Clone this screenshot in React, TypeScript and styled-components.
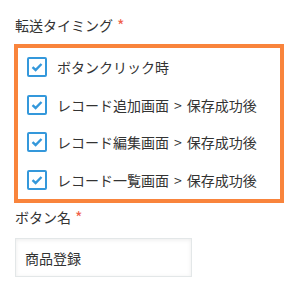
import styled, { createGlobalStyle } from "styled-components";

const Global = createGlobalStyle`
  body {
    margin: 0;
    background: #fff;
    font-family: "Noto Sans CJK JP", "Noto Sans", sans-serif;
    color: #333;
  }
`

const Page = styled.div`
  padding: 15px 0 0 14px;
`

const Label = styled.div<{ $top?: number }>`
  font-size: 14px;
  line-height: 20px;
  height: 20px;
  padding-left: 1px;
  margin-top: ${(p) => p.$top || 0}px;
  display: flex;
  align-items: center;
`

const Required = styled.span`
  color: #f0604a;
  font-size: 16px;
  margin-left: 4px;
  line-height: 20px;
`

const Frame = styled.div`
  box-sizing: border-box;
  width: 270px;
  height: 159px;
  margin-top: 9px;
  border: 4px solid #f9843c;
  display: flex;
  flex-direction: column;
`

const Row = styled.label`
  flex: 1;
  display: flex;
  align-items: center;
  padding-left: 9px;
  font-size: 14px;
`

const Sep = styled.span`
  margin: 0 5px;
`

const Box = styled.span`
  box-sizing: border-box;
  width: 20px;
  height: 20px;
  border: 2px solid #3498db;
  border-radius: 2px;
  display: flex;
  align-items: center;
  justify-content: center;
  margin-right: 10px;
  flex-shrink: 0;
`

const Input = styled.div`
  box-sizing: border-box;
  width: 177px;
  height: 39px;
  margin: 11px 0 0 1px;
  border: 1px solid #e3e7e8;
  background: #fff;
  box-shadow: inset 0 1px 4px rgba(0, 0, 0, 0.08);
  font-size: 14px;
  display: flex;
  align-items: center;
  padding-left: 9px;
`

const options = [
  ["ボタンクリック時"],
  ["レコード追加画面", "保存成功後"],
  ["レコード編集画面", "保存成功後"],
  ["レコード一覧画面", "保存成功後"],
]

const Check = () => (
  <svg width="12" height="10" viewBox="0 0 12 10">
    <path d="M1.5 5.2 L4.6 8 L10.5 2" fill="none" stroke="#3498db" strokeWidth="2.4" />
  </svg>
)

const App = () => {
  return (
    <Page>
      <Global />
      <Label>
        転送タイミング<Required>*</Required>
      </Label>
      <Frame>
        {options.map((o) => (
          <Row key={o.join()}>
            <Box>
              <Check />
            </Box>
            {o[0]}
            {o[1] && (
              <>
                <Sep>&gt;</Sep>
                {o[1]}
              </>
            )}
          </Row>
        ))}
      </Frame>
      <Label $top={4}>
        ボタン名<Required>*</Required>
      </Label>
      <Input>商品登録</Input>
    </Page>
  )
}

export default App
